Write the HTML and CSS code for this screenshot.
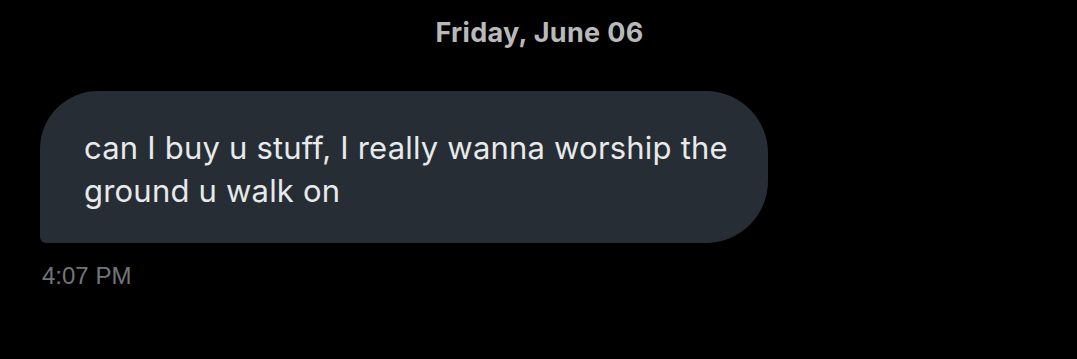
FILE: index.html
```
<!doctype html>
<html>
<head>
    <meta charset="utf-8">
    <title>Messages</title>
    <link rel="stylesheet" href="styles.css">
</head>
<body>
    <div class="thread">
        <div class="day">Friday, June 06</div>
        <div class="message">
            <div class="bubble">can I buy u stuff, I really wanna worship the ground u walk on</div>
            <div class="time">4:07 PM</div>
        </div>
    </div>
</body>
</html>
```
FILE: styles.css
```
html {
    background: #000;
}

body {
    margin: 0;
    font-family: Inter, "Noto Sans", sans-serif;
}

.thread {
    padding: 15px 40px 0;
}

.day {
    text-align: center;
    color: #b9b9b9;
    font-weight: bold;
    font-size: 27px;
    line-height: 36px;
    letter-spacing: 0.3px;
    padding-left: 2px;
}

.message {
    margin-top: 40px;
}

.bubble {
    box-sizing: border-box;
    width: 728px;
    background: #262d34;
    color: #e7e9ea;
    font-size: 31px;
    line-height: 43px;
    letter-spacing: 0.2px;
    padding: 35px 30px 31px 44px;
    border-radius: 58px 62px 62px 6px;
}

.time {
    margin-top: 19px;
    padding-left: 2px;
    color: #71767b;
    font-family: "Liberation Sans", Arial, sans-serif;
    font-size: 24px;
    line-height: 28px;
}
```
